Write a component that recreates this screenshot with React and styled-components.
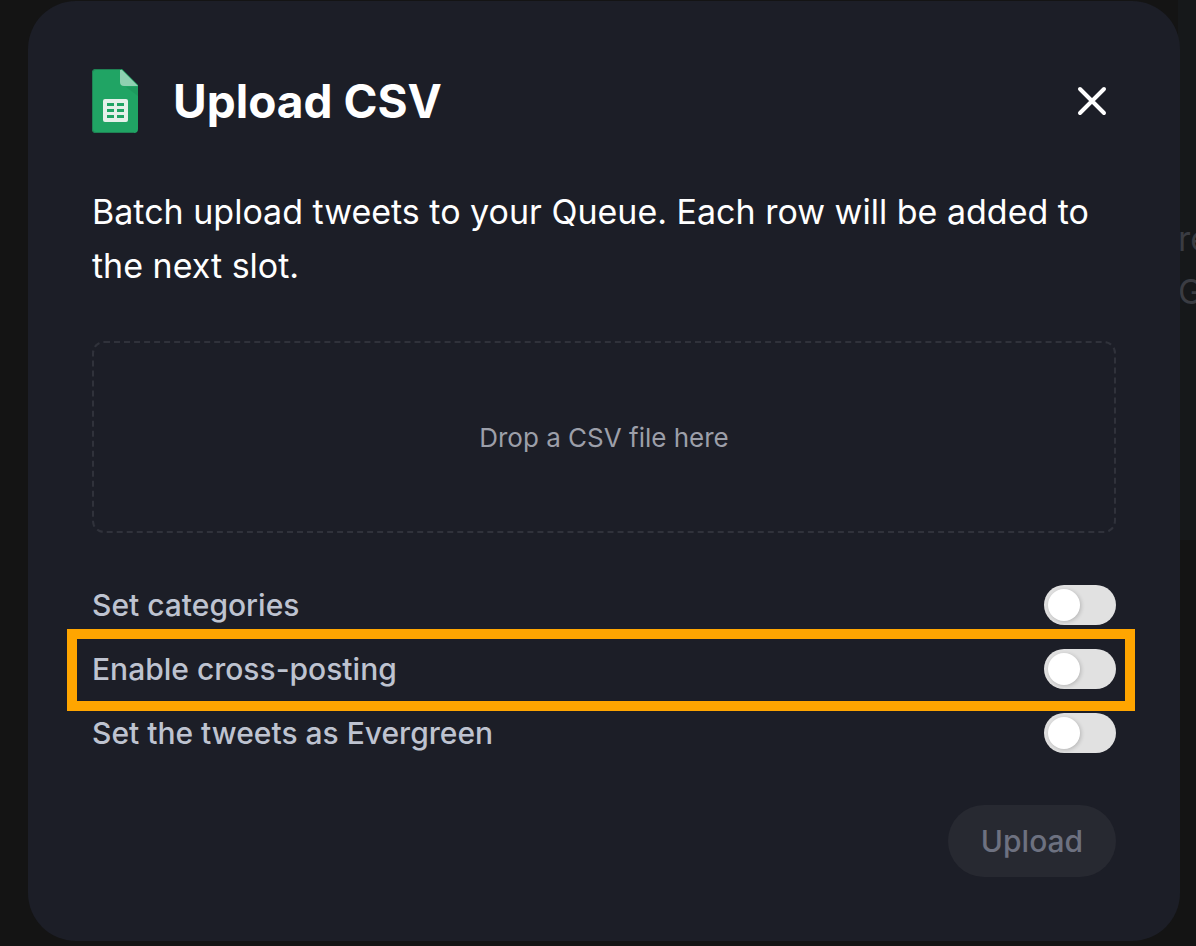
import { useState } from 'react'
import styled, { createGlobalStyle } from 'styled-components'

const GlobalStyle = createGlobalStyle`
  * {
    box-sizing: border-box;
  }

  body {
    margin: 0;
    background-color: #141414;
    color: white;
    font-family: Inter, 'Liberation Sans', sans-serif;
    overflow-x: hidden;
  }

  h1, p {
    margin: 0;
  }
`

const Screen = styled.div`
  position: relative;
  min-height: 100vh;
  padding: 1px 16px 4px 28px;
  overflow: hidden;
`

// Page behind the modal, only a strip of it is visible
const PageBehind = styled.div`
  position: absolute;
  top: 0;
  left: calc(100% - 18px);
  height: 540px;
  padding-top: 212px;
  background-color: #16181a;
  color: #3a3c42;
  font-size: 34px;
  line-height: 53px;
  white-space: nowrap;
`

const Modal = styled.main`
  position: relative;
  display: flex;
  flex-direction: column;
  padding: 64px;
  border-radius: 48px;
  background-color: #1c1e27;
`

const Header = styled.header`
  display: flex;
  align-items: center;
  height: 72px;
`

const Title = styled.h1`
  flex: 1;
  margin-left: 34px;
  font-size: 46px;
  font-weight: 700;
  line-height: 72px;
`

const CloseButton = styled.button`
  display: flex;
  align-items: center;
  justify-content: center;
  width: 48px;
  height: 48px;
  padding: 0;
  border: none;
  background: none;
  color: white;
  cursor: pointer;
`

const Description = styled.p`
  margin: 48px 0;
  font-size: 34px;
  line-height: 54px;
`

const DropZone = styled.label`
  position: relative;
  display: flex;
  align-items: center;
  justify-content: center;
  height: 192px;
  border: 2px dashed #30323b;
  border-radius: 12px;
  color: #9c9fa9;
  font-size: 26px;
  cursor: pointer;
`

const FileInput = styled.input`
  position: absolute;
  inset: 0;
  width: 100%;
  opacity: 0;
  cursor: pointer;
`

const Options = styled.div`
  margin: 40px 0;
`

const OptionRow = styled.label`
  position: relative;
  display: flex;
  align-items: center;
  justify-content: space-between;
  height: 64px;
  color: #bec3d0;
  font-size: 30px;
  font-weight: 500;
  cursor: pointer;
`

const Highlight = styled.span`
  position: absolute;
  inset: -8px -19px -10px -25px;
  border: 10px solid #ffa500;
  pointer-events: none;
`

const Switch = styled.input`
  appearance: none;
  display: flex;
  align-items: center;
  width: 72px;
  height: 40px;
  margin: 0;
  padding: 4px;
  border-radius: 20px;
  background-color: ${(props) => (props.checked ? '#1d9bf0' : '#e1e1e1')};
  cursor: pointer;

  &::before {
    content: '';
    width: 32px;
    height: 32px;
    margin-left: ${(props) => (props.checked ? '32px' : '0')};
    border-radius: 50%;
    background-color: white;
    box-shadow: 1px 1px 4px rgba(0, 0, 0, 0.2);
  }
`

const UploadButton = styled.button`
  align-self: flex-end;
  width: 168px;
  height: 72px;
  border: none;
  border-radius: 36px;
  background-color: #272931;
  color: #6d7180;
  font-family: inherit;
  font-size: 30px;
  font-weight: 500;
`

const options = [
  { id: 'categories', label: 'Set categories' },
  { id: 'crossPosting', label: 'Enable cross-posting', highlighted: true },
  { id: 'evergreen', label: 'Set the tweets as Evergreen' },
]

function SheetsIcon() {
  return (
    <svg width="47" height="64" viewBox="0 0 47 64" aria-hidden="true">
      <path d="M4 0h26l16 16v44a4 4 0 0 1-4 4H4a4 4 0 0 1-4-4V4a4 4 0 0 1 4-4z" fill="#20a464" />
      <path d="M4 0h25v1H4a3 3 0 0 0-3 3v56a3 3 0 0 0 3 3h38v1H4a4 4 0 0 1-4-4V4a4 4 0 0 1 4-4z" fill="#1f8254" />
      <path d="M28 1h2l16 16H32a4 4 0 0 1-4-4z" fill="#8fd1b1" />
      <path d="M34 18h12v9z" fill="#17864f" opacity="0.3" />
      <path
        fillRule="evenodd"
        d="M13 30h21a2 2 0 0 1 2 2v19a2 2 0 0 1-2 2H13a2 2 0 0 1-2-2V32a2 2 0 0 1 2-2zM15 34v3h7v-3zM25 34v3h7v-3zM15 40v3h7v-3zM25 40v3h7v-3zM15 46v3h7v-3zM25 46v3h7v-3z"
        fill="#e6f0ea"
      />
    </svg>
  )
}

function App() {
  const [enabled, setEnabled] = useState({})

  const toggle = (id) => {
    setEnabled((prev) => ({ ...prev, [id]: !prev[id] }))
  }

  return (
    <>
      <GlobalStyle />
      <Screen>
        <PageBehind aria-hidden="true">
          re
          <br />
          G
        </PageBehind>

        <Modal role="dialog" aria-labelledby="upload-title">
          <Header>
            <SheetsIcon />
            <Title id="upload-title">Upload CSV</Title>
            <CloseButton type="button" aria-label="Close">
              <svg width="30" height="30" viewBox="0 0 30 30" aria-hidden="true">
                <path d="M3 3l24 24M27 3L3 27" stroke="currentColor" strokeWidth="4" strokeLinecap="round" />
              </svg>
            </CloseButton>
          </Header>

          <Description>
            Batch upload tweets to your Queue. Each row will be added to the next slot.
          </Description>

          <DropZone>
            Drop a CSV file here
            <FileInput type="file" accept=".csv" />
          </DropZone>

          <Options>
            {options.map(({ id, label, highlighted }) => (
              <OptionRow key={id}>
                {label}
                <Switch type="checkbox" checked={!!enabled[id]} onChange={() => toggle(id)} />
                {highlighted && <Highlight />}
              </OptionRow>
            ))}
          </Options>

          <UploadButton type="button" disabled>Upload</UploadButton>
        </Modal>
      </Screen>
    </>
  )
}

export default App
